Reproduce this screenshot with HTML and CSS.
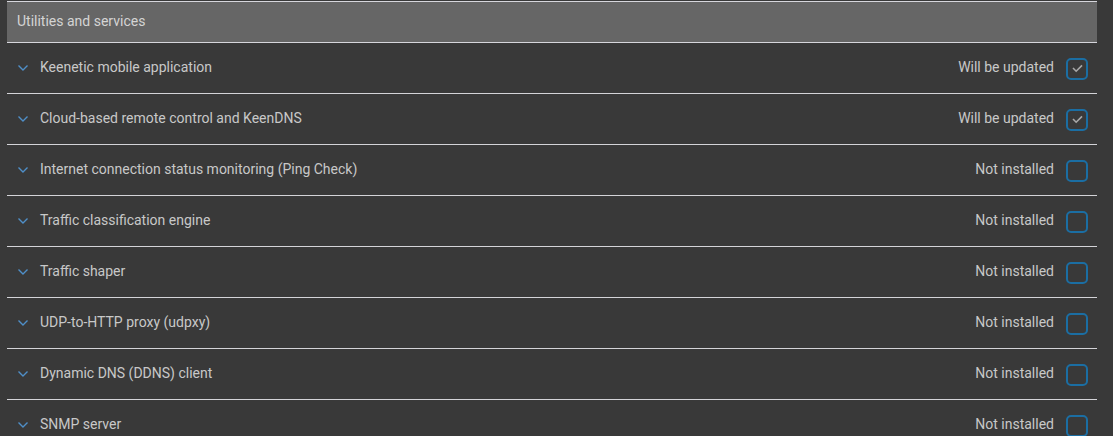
FILE: index.html
```html
<!DOCTYPE html>
<html>
<head>
<meta charset="utf-8">
<link rel="stylesheet" href="styles.css">
</head>
<body>
<div class="panel">
  <div class="panel-header">Utilities and services</div>
  <div class="row">
    <svg class="chev" viewBox="0 0 12 8"><path d="M1.5 1.5 L6 6 L10.5 1.5"/></svg>
    <span class="name">Keenetic mobile application</span>
    <span class="status">Will be updated</span>
    <span class="box"><svg viewBox="0 0 12 10"><path d="M1 4.5 L4.5 8 L11 1.5"/></svg></span>
  </div>
  <div class="row">
    <svg class="chev" viewBox="0 0 12 8"><path d="M1.5 1.5 L6 6 L10.5 1.5"/></svg>
    <span class="name">Cloud-based remote control and KeenDNS</span>
    <span class="status">Will be updated</span>
    <span class="box"><svg viewBox="0 0 12 10"><path d="M1 4.5 L4.5 8 L11 1.5"/></svg></span>
  </div>
  <div class="row">
    <svg class="chev" viewBox="0 0 12 8"><path d="M1.5 1.5 L6 6 L10.5 1.5"/></svg>
    <span class="name">Internet connection status monitoring (Ping Check)</span>
    <span class="status">Not installed</span>
    <span class="box"></span>
  </div>
  <div class="row">
    <svg class="chev" viewBox="0 0 12 8"><path d="M1.5 1.5 L6 6 L10.5 1.5"/></svg>
    <span class="name">Traffic classification engine</span>
    <span class="status">Not installed</span>
    <span class="box"></span>
  </div>
  <div class="row">
    <svg class="chev" viewBox="0 0 12 8"><path d="M1.5 1.5 L6 6 L10.5 1.5"/></svg>
    <span class="name">Traffic shaper</span>
    <span class="status">Not installed</span>
    <span class="box"></span>
  </div>
  <div class="row">
    <svg class="chev" viewBox="0 0 12 8"><path d="M1.5 1.5 L6 6 L10.5 1.5"/></svg>
    <span class="name">UDP-to-HTTP proxy (udpxy)</span>
    <span class="status">Not installed</span>
    <span class="box"></span>
  </div>
  <div class="row">
    <svg class="chev" viewBox="0 0 12 8"><path d="M1.5 1.5 L6 6 L10.5 1.5"/></svg>
    <span class="name">Dynamic DNS (DDNS) client</span>
    <span class="status">Not installed</span>
    <span class="box"></span>
  </div>
  <div class="row">
    <svg class="chev" viewBox="0 0 12 8"><path d="M1.5 1.5 L6 6 L10.5 1.5"/></svg>
    <span class="name">SNMP server</span>
    <span class="status">Not installed</span>
    <span class="box"></span>
  </div>
</div>
</body>
</html>
```

FILE: styles.css
```css
html, body {
  margin: 0;
  padding: 0;
  background: #393939;
  height: 100%;
  overflow: hidden;
}
body {
  padding: 1px 16px 0 7px;
  font-family: Roboto, "Liberation Sans", sans-serif;
  font-size: 14px;
}
.panel {
  width: 1090px;
}
.panel-header {
  border-top: 1px solid #d6d6dc;
  border-bottom: 1px solid #d6d6dc;
  background: #666666;
  color: #d4d4d4;
  display: flex;
  align-items: center;
  padding-left: 10px;
  padding-bottom: 2px;
  box-sizing: border-box;
  height: 42px;
}
.row {
  height: 51px;
  box-sizing: border-box;
  border-bottom: 1px solid #d4d4d8;
  display: flex;
  align-items: center;
  padding: 0 9px 2px 10px;
  color: #c8c8c8;
}
.chev {
  width: 12px;
  height: 8px;
  fill: none;
  stroke: #4f8fc8;
  stroke-width: 1.4;
  margin-right: 11px;
  margin-top: 2px;
}
.name {
  flex: 1;
}
.status {
  margin-right: 12px;
}
.box {
  width: 22px;
  height: 22px;
  box-sizing: border-box;
  border: 2px solid #1b6ea3;
  border-radius: 5px;
  display: flex;
  align-items: center;
  justify-content: center;
  margin-top: 3px;
}
.box svg {
  width: 11px;
  height: 9px;
  fill: none;
  stroke: #a8a8a8;
  stroke-width: 1.8;
}
```
